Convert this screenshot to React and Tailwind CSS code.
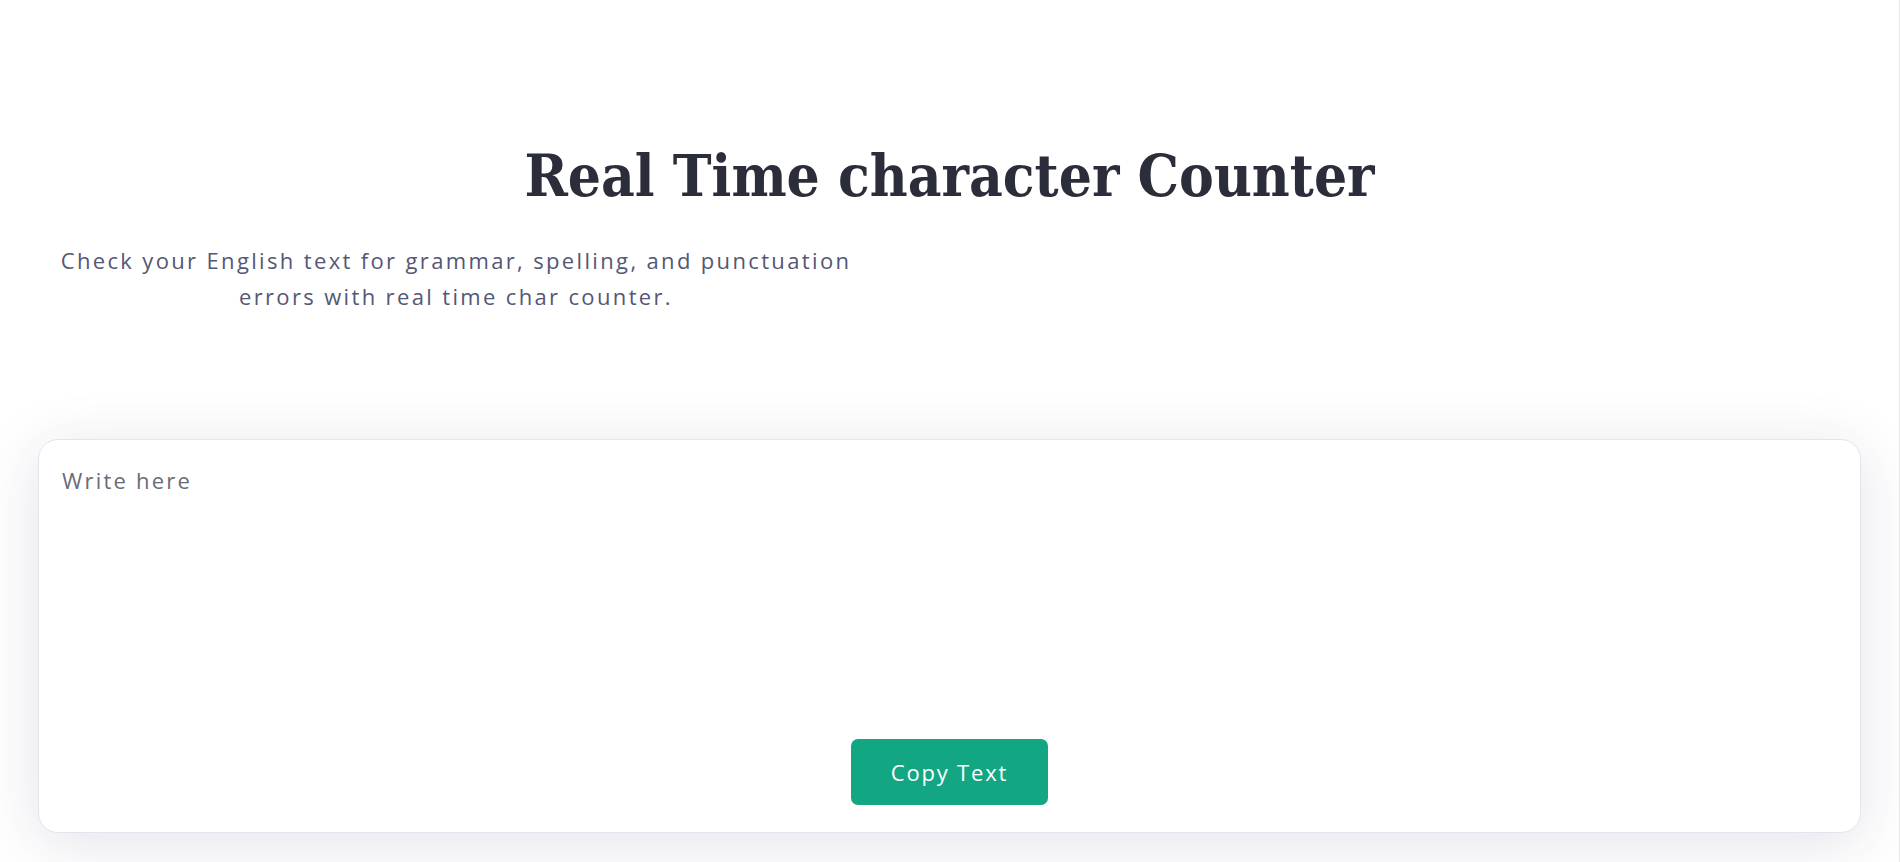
import { useState } from 'react';

export default function App() {
    const [text, setText] = useState('');

    function handleCopy() {
        if (navigator.clipboard) navigator.clipboard.writeText(text).catch(() => {});
    }

    return (
        <div className="min-h-screen w-full bg-white border-r border-[#e6e6e6] overflow-hidden">
            <div className="pt-[140px]">
                <h1 className="text-center text-[58px] leading-[72px] font-bold text-[#2b2d3a] font-['DejaVu_Serif_Condensed','DejaVu_Serif',serif]">
                    Real Time character Counter
                </h1>
                <p className="mt-[30px] ml-[39px] w-[834px] text-center text-[22px] leading-[36px] tracking-[2.35px] text-[#545775] font-['Open_Sans',sans-serif]">
                    Check your English text for grammar, spelling, and punctuation errors with real time char counter.
                </p>
            </div>

            {/* Editor card */}
            <div className="mx-[38px] mt-[125px] mb-[40px] h-[394px] flex flex-col rounded-[20px] border border-[#e4e4ee] bg-white shadow-[0_10px_60px_rgba(40,40,90,0.13)]">
                <textarea
                    value={text}
                    onChange={(e) => setText(e.target.value)}
                    placeholder="Write here"
                    className="flex-1 resize-none bg-transparent px-[23px] pt-[24px] text-[22px] leading-[32px] tracking-[2.2px] text-[#2b2d3a] placeholder:text-[#6b6b78] outline-none font-['Open_Sans',sans-serif]"
                />
                <div className="flex justify-center pb-[27px]">
                    <button
                        onClick={handleCopy}
                        className="h-[66px] w-[197px] rounded-[7px] bg-[#12a683] text-white text-[22px] tracking-[1.8px] font-['Open_Sans',sans-serif]"
                    >
                        Copy Text
                    </button>
                </div>
            </div>
        </div>
    );
}
